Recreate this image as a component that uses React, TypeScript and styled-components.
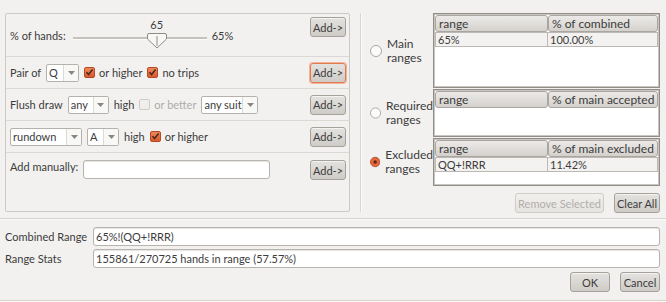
import React from "react";
import styled, { createGlobalStyle } from "styled-components";

const GlobalStyle = createGlobalStyle`
  body {
    margin: 0;
    background: #f2f1f0;
    font-family: "Lato", "Liberation Sans", sans-serif;
    font-size: 11px;
    color: #3c3c3c;
  }
`;

const Window = styled.div`
  width: 666px;
  height: 302px;
  background: #f2f1f0;
  display: flex;
  flex-direction: column;
  overflow: hidden;
`;

const Top = styled.div`
  display: flex;
  padding: 13px 6px 0 5px;
`;

const LeftPanel = styled.div`
  width: 343px;
  height: 197px;
  border: 1px solid #cdcac6;
  border-radius: 2px;
  display: flex;
  flex-direction: column;
`;

const Row = styled.div<{ $height?: number; $last?: boolean }>`
  display: flex;
  align-items: ${(p) => (p.$last ? "flex-start" : "center")};
  gap: 5px;
  padding: ${(p) => (p.$last ? "7px 3px 0 4px" : "0 3px 0 4px")};
  height: ${(p) => (p.$height ? `${p.$height}px` : "auto")};
  flex: ${(p) => (p.$last ? 1 : "none")};
  border-bottom: ${(p) => (p.$last ? "none" : "1px solid #dcd9d5")};
`;

const Label = styled.span<{ $disabled?: boolean }>`
  white-space: nowrap;
  color: ${(p) => (p.$disabled ? "#aeaca9" : "#3c3c3c")};
`;

const Button = styled.button<{ $focused?: boolean; $width?: number }>`
  font-family: inherit;
  font-size: 11px;
  height: 20px;
  width: ${(p) => (p.$width ? `${p.$width}px` : "auto")};
  padding: 0 2px;
  color: #3c3c3c;
  border: 1px solid ${(p) => (p.$focused ? "#e07a50" : "#a5a19b")};
  box-shadow: ${(p) => (p.$focused ? "0 0 0 1px #f3b396" : "inset 0 1px 0 #f4f3f2")};
  border-radius: 3px;
  background: linear-gradient(#e4e2df, #cfccc7);
  white-space: nowrap;
  &:disabled {
    color: #b1aeaa;
    border-color: #d0cdc8;
    background: linear-gradient(#f1f0ee, #e6e4e1);
    box-shadow: none;
  }
`;

const AddButton = styled(Button)<{ $top?: number }>`
  margin-left: auto;
  width: 36px;
  padding: 0;
  align-self: ${(p) => (p.$top !== undefined ? "flex-start" : "auto")};
  margin-top: ${(p) => (p.$top !== undefined ? `${p.$top}px` : "0")};
`;

const SliderBox = styled.div`
  position: relative;
  width: 134px;
  height: 32px;
  margin-left: 2px;
`;

const Track = styled.div`
  position: absolute;
  left: 0;
  right: 0;
  top: 18px;
  height: 2px;
  background: #c5c2bd;
  border-bottom: 1px solid #fbfbfa;
`;

const ThumbValue = styled.span`
  position: absolute;
  top: -1px;
  width: 20px;
  text-align: center;
  font-size: 11px;
`;

const Thumb = styled.svg`
  position: absolute;
  top: 14px;
`;

const ComboBox = styled.div<{ $width: number }>`
  display: inline-flex;
  width: ${(p) => p.$width}px;
  height: 18px;
  box-sizing: border-box;
  border: 1px solid #b5b1ac;
  border-radius: 2px;
  background: #fff;
  flex: none;
`;

const ComboText = styled.span`
  flex: 1;
  min-width: 0;
  padding-left: 2px;
  line-height: 16px;
  font-size: 11px;
  white-space: nowrap;
  overflow: hidden;
`;

const ComboArrow = styled.span`
  width: 14px;
  flex: none;
  display: flex;
  align-items: center;
  justify-content: center;
  border-left: 1px solid #dddad6;
  background: #f8f8f7;
`;

const CheckRow = styled.label`
  display: inline-flex;
  align-items: center;
  gap: 4px;
`;

const VSep = styled.div`
  width: 1px;
  height: 199px;
  margin: 0 5px 0 10px;
  background: #d9d6d2;
  box-shadow: 1px 0 0 #fbfaf9;
`;

const RightPanel = styled.div`
  display: flex;
  flex-direction: column;
  width: 294px;
`;

const RangeGrid = styled.div`
  display: grid;
  grid-template-columns: 67px 227px;
  grid-template-rows: 75px 48px 48px;
  row-gap: 1px;
  align-items: center;
`;

const RadioItem = styled.label`
  display: flex;
  align-items: center;
  gap: 5px;
  padding-left: 4px;
  font-size: 12px;
`;

const RadioText = styled.span`
  width: min-content;
  line-height: 14px;
`;

const TableBox = styled.div`
  height: 100%;
  box-sizing: border-box;
  border: 1px solid #918e8a;
  box-shadow: inset 0 0 0 1px #c9c6c2;
  background: #fff;
  display: flex;
  flex-direction: column;
  padding: 1px;
`;

const TableHeader = styled.div`
  display: grid;
  grid-template-columns: 113px 1fr;
`;

const HeaderCell = styled.div`
  height: 17px;
  box-sizing: border-box;
  border: 1px solid #a9a5a0;
  border-radius: 3px;
  background: linear-gradient(#eceae8, #d4d1cd);
  padding-left: 3px;
  line-height: 15px;
  font-size: 12px;
  white-space: nowrap;
  overflow: hidden;
`;

const DataRow = styled.div`
  display: grid;
  grid-template-columns: 113px 1fr;
`;

const DataCell = styled.div`
  height: 15px;
  box-sizing: border-box;
  border: 1px solid #bcb9b5;
  border-left-width: 0;
  background: #f3f2f1;
  padding-left: 2px;
  font-size: 11px;
  line-height: 13px;
  &:first-child {
    border-left-width: 1px;
  }
`;

const ButtonRow = styled.div<{ $gap: number; $top: number }>`
  display: flex;
  justify-content: flex-end;
  gap: ${(p) => p.$gap}px;
  margin-top: ${(p) => p.$top}px;
`;

const HSep = styled.div<{ $top: number }>`
  height: 1px;
  margin-top: ${(p) => p.$top}px;
  background: #d6d3cf;
  border-bottom: 1px solid #fbfaf9;
`;

const Form = styled.div`
  display: flex;
  flex-direction: column;
  gap: 3px;
  padding: 7px 6px 0 5px;
`;

const FormRow = styled.div`
  display: grid;
  grid-template-columns: 88px 1fr;
  align-items: center;
`;

const TextInput = styled.div<{ $width?: number }>`
  height: 19px;
  box-sizing: border-box;
  width: ${(p) => (p.$width ? `${p.$width}px` : "auto")};
  border: 1px solid #b7b3ae;
  border-radius: 3px;
  background: #fff;
  box-shadow: inset 0 1px 1px #e6e4e1;
  padding-left: 2px;
  font-size: 11px;
  line-height: 17px;
  white-space: nowrap;
`;

const Combo = ({ value, width }: { value: string; width: number }) => (
  <ComboBox $width={width}>
    <ComboText>{value}</ComboText>
    <ComboArrow>
      <svg width="7" height="4" viewBox="0 0 7 4">
        <path d="M0 0 H7 L3.5 4 Z" fill="#8a8782" />
      </svg>
    </ComboArrow>
  </ComboBox>
);

const Check = ({ label, checked = true, disabled = false }: { label: string; checked?: boolean; disabled?: boolean }) => (
  <CheckRow>
    <svg width="11" height="11" viewBox="0 0 11 11">
      <defs>
        <linearGradient id="chk" x1="0" y1="0" x2="0" y2="1">
          <stop offset="0" stopColor="#f08a5d" />
          <stop offset="1" stopColor="#d9572c" />
        </linearGradient>
      </defs>
      {checked ? (
        <>
          <rect x="0.5" y="0.5" width="10" height="10" rx="1.5" fill="url(#chk)" stroke="#b34a26" />
          <path d="M2.5 5.2 L4.6 7.6 L8.6 2.6" fill="none" stroke="#4b2b1e" strokeWidth="1.6" />
        </>
      ) : (
        <rect x="0.5" y="0.5" width="10" height="10" rx="1.5" fill="#efeeec" stroke={disabled ? "#cfccc8" : "#a5a19c"} />
      )}
    </svg>
    <Label $disabled={disabled}>{label}</Label>
  </CheckRow>
);

const Radio = ({ label, checked = false }: { label: string; checked?: boolean }) => (
  <RadioItem>
    <svg width="12" height="12" viewBox="0 0 12 12">
      {checked ? (
        <>
          <circle cx="6" cy="6" r="5.5" fill="#e4673b" stroke="#b24a26" />
          <circle cx="6" cy="6" r="2" fill="#5a2a1c" />
        </>
      ) : (
        <circle cx="6" cy="6" r="5.5" fill="#fcfcfc" stroke="#a9a5a0" />
      )}
    </svg>
    <RadioText>{label}</RadioText>
  </RadioItem>
);

const RangeTable = ({ second, rows }: { second: string; rows: [string, string][] }) => (
  <TableBox>
    <TableHeader>
      <HeaderCell>range</HeaderCell>
      <HeaderCell>{second}</HeaderCell>
    </TableHeader>
    {rows.map(([a, b]) => (
      <DataRow key={a}>
        <DataCell>{a}</DataCell>
        <DataCell>{b}</DataCell>
      </DataRow>
    ))}
  </TableBox>
);

const Slider = ({ value }: { value: number }) => {
  const left = Math.round(114 * (value / 100));
  return (
    <SliderBox>
      <Track />
      <ThumbValue style={{ left }}>{value}</ThumbValue>
      <Thumb width="20" height="16" viewBox="0 0 20 16" style={{ left }}>
        <path d="M2 0.5 H18 Q19.5 0.5 19.5 2 V6 L10 15 L0.5 6 V2 Q0.5 0.5 2 0.5 Z" fill="#f7f7f6" stroke="#8e8b86" />
        <path d="M10 3 V13" stroke="#8e8b86" />
      </Thumb>
    </SliderBox>
  );
};

export default function App() {
  return (
    <Window>
      <GlobalStyle />
      <Top>
        <LeftPanel>
          <Row $height={42}>
            <Label>% of hands:</Label>
            <Slider value={65} />
            <Label>65%</Label>
            <AddButton $top={3}>Add-&gt;</AddButton>
          </Row>
          <Row $height={31}>
            <Label>Pair of</Label>
            <Combo value="Q" width={33} />
            <Check label="or higher" />
            <Check label="no trips" />
            <AddButton $focused>Add-&gt;</AddButton>
          </Row>
          <Row $height={31}>
            <Label>Flush draw</Label>
            <Combo value="any" width={41} />
            <Label>high</Label>
            <Check label="or better" checked={false} disabled />
            <Combo value="any suit" width={57} />
            <AddButton>Add-&gt;</AddButton>
          </Row>
          <Row $height={31}>
            <Combo value="rundown" width={72} />
            <Combo value="A" width={32} />
            <Label>high</Label>
            <Check label="or higher" />
            <AddButton>Add-&gt;</AddButton>
          </Row>
          <Row $last>
            <Label>Add manually:</Label>
            <TextInput $width={187} />
            <AddButton>Add-&gt;</AddButton>
          </Row>
        </LeftPanel>
        <VSep />
        <RightPanel>
          <RangeGrid>
            <Radio label="Main ranges" />
            <RangeTable second="% of combined" rows={[["65%", "100.00%"]]} />
            <Radio label="Required ranges" />
            <RangeTable second="% of main accepted" rows={[]} />
            <Radio label="Excluded ranges" checked />
            <RangeTable second="% of main excluded" rows={[["QQ+!RRR", "11.42%"]]} />
          </RangeGrid>
          <ButtonRow $gap={10} $top={7}>
            <Button disabled $width={89}>Remove Selected</Button>
            <Button $width={46}>Clear All</Button>
          </ButtonRow>
        </RightPanel>
      </Top>
      <HSep $top={5} />
      <Form>
        <FormRow>
          <Label>Combined Range</Label>
          <TextInput>65%!(QQ+!RRR)</TextInput>
        </FormRow>
        <FormRow>
          <Label>Range Stats</Label>
          <TextInput>155861/270725 hands in range (57.57%)</TextInput>
        </FormRow>
        <ButtonRow $gap={10} $top={1}>
          <Button $width={40}>OK</Button>
          <Button $width={40}>Cancel</Button>
        </ButtonRow>
      </Form>
      <HSep $top={8} />
    </Window>
  );
}
